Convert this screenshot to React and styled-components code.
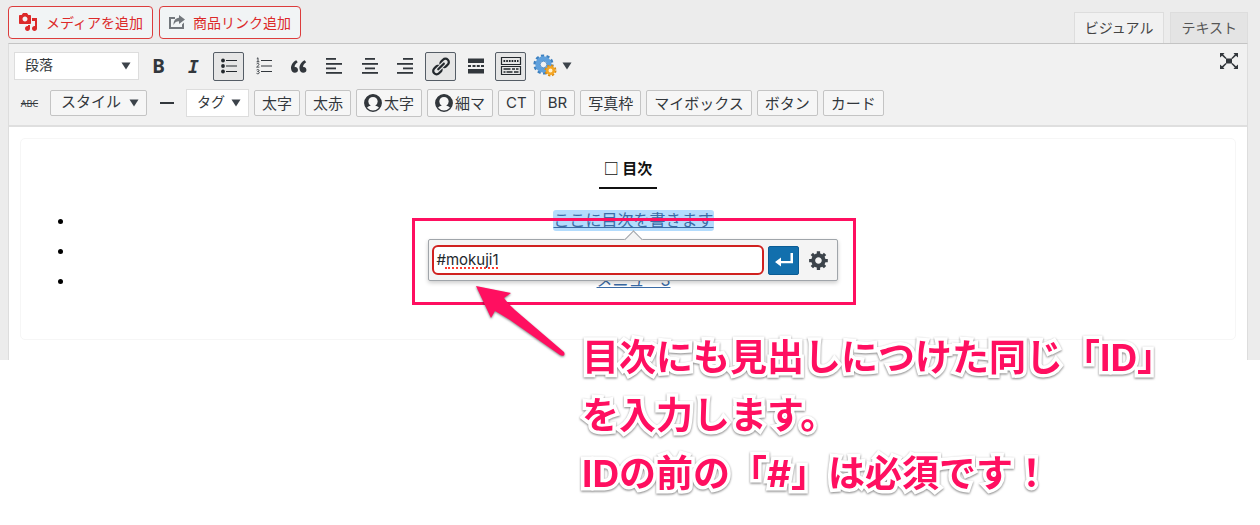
import React, { useState } from "react";
import styled, { createGlobalStyle } from "styled-components";

/* Icons */

const MediaIcon = () => (
  <svg width="20" height="20" viewBox="0 0 20 20" fill="currentColor" aria-hidden="true">
    <path d="M13 11V4c0-.55-.45-1-1-1h-1.67L9 1H5L3.67 3H2c-.55 0-1 .45-1 1v7c0 .55.45 1 1 1h10c.55 0 1-.45 1-1zM7 4.5c1.38 0 2.5 1.12 2.5 2.5S8.38 9.5 7 9.5 4.5 8.38 4.5 7 5.62 4.5 7 4.5zM14 6h5v10.5c0 1.38-1.12 2.5-2.5 2.5S14 17.88 14 16.5s1.12-2.5 2.5-2.5c.17 0 .34.02.5.05V9h-3V6zm-4 8.05V13h2v3.5c0 1.38-1.12 2.5-2.5 2.5S7 17.88 7 16.5 8.12 14 9.5 14c.17 0 .34.02.5.05z" />
  </svg>
);

const ShareIcon = () => (
  <svg width="16" height="14" viewBox="0 0 16 14" fill="#72777c" aria-hidden="true">
    <path d="M0 2h6v2H2v8h11V9.500l2-2V14H0z" />
    <path d="M10 0l6 4.500L10 9V6.300C7.500 6.300 5.800 7.200 4.600 10 4.200 5.800 6.500 3 10 2.700z" />
  </svg>
);

const BulletListIcon = () => (
  <svg width="20" height="20" viewBox="0 0 20 20" fill="currentColor" aria-hidden="true">
    <circle cx="4" cy="4.500" r="1.900" />
    <circle cx="4" cy="10" r="1.900" />
    <circle cx="4" cy="15.500" r="1.900" />
    <path d="M7 4h11v1H7zM7 9.500h11v1H7zM7 15h11v1H7z" />
  </svg>
);

const NumberListIcon = () => (
  <svg width="20" height="20" viewBox="0 0 20 20" fill="currentColor" aria-hidden="true">
    <path
      d="M2.800 2.600L4 1.800v4M2.600 5.800h2.800M2.600 8c.8-1 2.400-.7 2.400.4 0 .9-1.500 1.700-2.400 2.700h2.800M2.600 14c1-.8 2.500-.4 2.500.5 0 .7-.7 1-1.500 1 .9 0 1.700.3 1.700 1.100 0 1.200-1.900 1.500-2.800.7"
      fill="none"
      stroke="currentColor"
      strokeWidth="0.900"
    />
    <path d="M7 4h11v1H7zM7 9.500h11v1H7zM7 15h11v1H7z" />
  </svg>
);

const QuoteIcon = () => (
  <svg width="21" height="21" viewBox="0 0 20 20" fill="currentColor" aria-hidden="true">
    <path d="M9.49 13.22c0-.74-.2-1.38-.61-1.9-.62-.78-1.83-.88-2.53-.72-.29-1.65 1.11-3.75 2.92-4.65L7.88 4c-2.73 1.3-5.42 4.28-4.96 8.05C3.21 14.43 4.59 16 6.54 16c.85 0 1.56-.25 2.12-.75s.83-1.18.83-2.03zm8.05 0c0-.74-.2-1.38-.61-1.9-.63-.78-1.83-.88-2.53-.72-.29-1.65 1.11-3.75 2.92-4.65L15.93 4c-2.73 1.3-5.41 4.28-4.95 8.05.29 2.38 1.66 3.95 3.61 3.95.85 0 1.56-.25 2.12-.75s.83-1.18.83-2.03z" />
  </svg>
);

const alignStart = { left: 2, center: 5, right: 8 };

const AlignIcon = ({ side }) => (
  <svg width="20" height="20" viewBox="0 0 20 20" fill="currentColor" aria-hidden="true">
    <rect x={alignStart[side]} y="2" width="10" height="1.800" />
    <rect x="2" y="7" width="16" height="1.800" />
    <rect x={alignStart[side]} y="11.500" width="10" height="1.800" />
    <rect x="2" y="16" width="16" height="1.800" />
  </svg>
);

const LinkIcon = () => (
  <svg width="21" height="21" viewBox="0 0 20 20" fill="currentColor" aria-hidden="true">
    <path d="M17.74 2.76c1.68 1.69 1.68 4.41 0 6.1l-1.53 1.52c-1.12 1.12-2.7 1.47-4.14 1.09l2.62-2.61.76-.77.76-.76c.84-.84.84-2.2 0-3.04-.84-.85-2.2-.85-3.04 0l-.77.76-3.38 3.38c-.37-1.44-.02-3.02 1.1-4.14l1.52-1.53c1.69-1.68 4.42-1.68 6.1 0zM8.59 13.43l5.34-5.34c.42-.42.42-1.1 0-1.52-.44-.43-1.13-.39-1.53 0l-5.33 5.34c-.42.42-.42 1.1 0 1.52.44.43 1.13.39 1.52 0zm-.76 2.29l4.14-4.15c.38 1.44.03 3.02-1.09 4.14l-1.52 1.53c-1.69 1.68-4.41 1.68-6.1 0-1.68-1.68-1.68-4.42 0-6.1l1.53-1.52c1.12-1.12 2.7-1.47 4.14-1.1l-4.14 4.15c-.85.84-.85 2.2 0 3.05.84.84 2.2.84 3.04 0z" />
  </svg>
);

const MoreIcon = () => (
  <svg width="20" height="20" viewBox="0 0 20 20" fill="currentColor" aria-hidden="true">
    <path d="M2 2.500h16v4.500H2zM2 9h3v2H2zM6.500 9h3v2h-3zM10.800 9h3v2h-3zM15 9h3v2h-3zM2 13h16v4.500H2z" />
  </svg>
);

const KitchenSinkIcon = () => (
  <svg width="22" height="20" viewBox="0 0 22 20" aria-hidden="true">
    <g fill="none" stroke="currentColor">
      <path d="M1.500 1.500h19v7h-19zM1.500 10.500h19v8h-19z" strokeWidth="1.200" />
      <path d="M3.500 5h15" strokeWidth="2" strokeDasharray="1.700 1" />
      <path d="M3.500 13h7M12 13h3M16 13h2.500M3.500 16h2M6.500 16h6M14 16h4.500" strokeWidth="1.600" />
    </g>
  </svg>
);

const GearsIcon = () => (
  <svg width="24" height="24" viewBox="0 0 24 24" aria-hidden="true">
    <circle cx="10.500" cy="10.500" r="8.600" fill="none" stroke="#3d80c0" strokeWidth="3" strokeDasharray="3.100 2.300" />
    <circle cx="10.500" cy="10.500" r="5.800" fill="#f1f1f1" stroke="#5fa0dc" strokeWidth="4.800" />
    <circle cx="10.500" cy="10.500" r="3.300" fill="#f1f1f1" stroke="#3d80c0" strokeWidth="0.800" />
    <circle cx="17.500" cy="16.500" r="5" fill="none" stroke="#d98a12" strokeWidth="2" strokeDasharray="2.200 1.730" />
    <circle cx="17.500" cy="16.500" r="3.300" fill="#fff0cf" stroke="#f5a623" strokeWidth="2.600" />
  </svg>
);

const UserIcon = () => (
  <svg width="18" height="18" viewBox="0 0 18 18" aria-hidden="true">
    <circle cx="9" cy="9" r="8.200" fill="#f7f7f7" stroke="#32373c" strokeWidth="1.400" />
    <path
      d="M9 .8a8.200 8.200 0 0 0-6.500 13.200c1-1.200 2.600-1.900 4.300-2.200A5.200 5.200 0 0 1 4.300 7.500C4.300 4.800 6.300 3 9 3s4.700 1.800 4.700 4.500a5.200 5.200 0 0 1-2.500 4.300c1.700.3 3.300 1 4.300 2.200A8.200 8.200 0 0 0 9 .8z"
      fill="#32373c"
    />
  </svg>
);

const RuleIcon = () => (
  <svg width="20" height="20" viewBox="0 0 20 20" fill="currentColor" aria-hidden="true">
    <path d="M3 9h14v2H3z" />
  </svg>
);

const ExpandIcon = () => (
  <svg width="18" height="16" viewBox="0 0 18 16" fill="currentColor" aria-hidden="true">
    <path d="M0 0h4.500L3.200 1.400 6.500 5l-.9.900L2 2.800 0 4.500zM18 0h-4.500l1.300 1.400L11.500 5l.9.900L16 2.800l2 1.700zM0 16h4.500l-1.300-1.400L6.500 11l-.9-.9L2 13.200 0 11.500zM18 16h-4.500l1.300-1.400L11.500 11l.9-.9 3.600 3.100 2-1.700zM6 5.500h6v5H6z" />
  </svg>
);

const EnterIcon = () => (
  <svg width="18" height="14" viewBox="0 0 18 14" fill="currentColor" aria-hidden="true">
    <path d="M0 9l6-4.500V8h9.500V0H18v10.300H6v3.200z" />
  </svg>
);

const CogIcon = () => (
  <svg width="22" height="22" viewBox="0 0 20 20" fill="#3c434a" aria-hidden="true">
    <path d="M18 12h-2.180c-.17.7-.44 1.350-.81 1.930l1.540 1.540-2.100 2.100-1.540-1.540c-.58.36-1.230.63-1.910.79V19H8v-2.180c-.68-.16-1.330-.43-1.910-.79l-1.540 1.540-2.120-2.120 1.540-1.540c-.36-.58-.63-1.230-.79-1.910H1V9.030h2.170c.16-.7.44-1.350.8-1.940L2.430 5.550l2.100-2.100 1.540 1.540c.58-.37 1.240-.64 1.930-.81V2h3v2.180c.68.16 1.330.43 1.910.79l1.540-1.540 2.120 2.120-1.540 1.540c.36.59.64 1.240.8 1.940H18V12zm-8.500 1.500c1.660 0 3-1.340 3-3s-1.340-3-3-3-3 1.340-3 3 1.340 3 3 3z" />
  </svg>
);

const Caret = () => (
  <svg width="10" height="8" viewBox="0 0 10 8" fill="#3c434a" aria-hidden="true">
    <path d="M0.500 0.500h9L5 7.500z" />
  </svg>
);

/* Quick tag buttons of the second toolbar row */
const quickTags = [
  { label: "太字" },
  { label: "太赤" },
  { label: "太字", user: true },
  { label: "細マ", user: true },
  { label: "CT" },
  { label: "BR" },
  { label: "写真枠" },
  { label: "マイボックス" },
  { label: "ボタン" },
  { label: "カード" },
];

const Dropdown = ({ name, label, width, tone }) => (
  <SelectBox $width={width}>
    <Select aria-label={name} $tone={tone} defaultValue={label}>
      <option>{label}</option>
    </Select>
    <Caret />
  </SelectBox>
);

const App = () => {
  const [url, setUrl] = useState("#mokuji1");

  return (
    <>
      <GlobalStyle />
      <Screen>
        <Header>
          <MediaButtons>
            <MediaButton>
              <MediaIcon />
              メディアを追加
            </MediaButton>
            <MediaButton>
              <ShareIcon />
              商品リンク追加
            </MediaButton>
          </MediaButtons>
          <Tabs>
            <Tab $active>ビジュアル</Tab>
            <Tab>テキスト</Tab>
          </Tabs>
        </Header>

        <Editor>
          <Toolbar>
            <ToolRow>
              <Dropdown name="書式" label="段落" width={125} />
              <ToolGroups>
                <ToolGroup>
                  <ToolButton aria-label="太字">
                    <BoldMark>B</BoldMark>
                  </ToolButton>
                  <ToolButton aria-label="イタリック">
                    <ItalicMark>I</ItalicMark>
                  </ToolButton>
                  <ToolButton aria-label="番号なしリスト" $pressed>
                    <BulletListIcon />
                  </ToolButton>
                  <ToolButton aria-label="番号付きリスト">
                    <NumberListIcon />
                  </ToolButton>
                  <ToolButton aria-label="引用">
                    <QuoteIcon />
                  </ToolButton>
                  <ToolButton aria-label="左寄せ">
                    <AlignIcon side="left" />
                  </ToolButton>
                </ToolGroup>
                <ToolGroup>
                  <ToolButton aria-label="中央揃え">
                    <AlignIcon side="center" />
                  </ToolButton>
                  <ToolButton aria-label="右寄せ">
                    <AlignIcon side="right" />
                  </ToolButton>
                </ToolGroup>
                <ToolGroup>
                  <ToolButton aria-label="リンクの挿入" $pressed>
                    <LinkIcon />
                  </ToolButton>
                  <ToolButton aria-label="続きを読む">
                    <MoreIcon />
                  </ToolButton>
                  <ToolButton aria-label="ツールバー切り替え" $pressed>
                    <KitchenSinkIcon />
                  </ToolButton>
                </ToolGroup>
                <GearsButton aria-label="設定">
                  <GearsIcon />
                  <Caret />
                </GearsButton>
              </ToolGroups>
              <ExpandButton aria-label="集中執筆モード">
                <ExpandIcon />
              </ExpandButton>
            </ToolRow>

            <ToolRow>
              <ToolButton aria-label="打ち消し">
                <StrikeMark>ABC</StrikeMark>
              </ToolButton>
              <StyleTools>
                <Dropdown name="スタイル" label="スタイル" width={97} tone="button" />
                <ToolButton aria-label="横ライン">
                  <RuleIcon />
                </ToolButton>
                <Dropdown name="タグ" label="タグ" width={63} />
              </StyleTools>
              <QuickTags>
                {quickTags.map((tag, index) => (
                  <QuickTag key={index} $user={tag.user}>
                    {tag.user && <UserIcon />}
                    <TagLabel>{tag.label}</TagLabel>
                  </QuickTag>
                ))}
              </QuickTags>
            </ToolRow>
          </Toolbar>

          <Content>
            <TocBox>
              <TocTitle>□ 目次</TocTitle>
              <TocList>
                <li>
                  <LinkAnchor>
                    <TocLink href="#mokuji1" $selected>
                      ここに目次を書きます
                    </TocLink>
                    <LinkPopup>
                      <UrlField>
                        <UrlInput
                          type="text"
                          aria-label="URL"
                          spellCheck={false}
                          value={url}
                          onChange={(e) => setUrl(e.target.value)}
                        />
                        {url === "#mokuji1" && <SpellingMark />}
                      </UrlField>
                      <ApplyButton aria-label="適用">
                        <EnterIcon />
                      </ApplyButton>
                      <ToolButton aria-label="リンク設定">
                        <CogIcon />
                      </ToolButton>
                    </LinkPopup>
                    <Frame />
                    <Arrow width="96" height="78" viewBox="0 0 96 78" aria-hidden="true">
                      <path
                        d="M2 2L37 9 30 14Q34 20 41 26L90 68Q91 70 90 71.500Q88 72 86 71L36 36Q28 31 21 27L17 34Z"
                        fill="#ff0f60"
                      />
                    </Arrow>
                  </LinkAnchor>
                </li>
                <li>
                  <TocLink href="#mokuji2">メニュー2</TocLink>
                </li>
                <li>
                  <TocLink href="#mokuji3">メニュー3</TocLink>
                </li>
              </TocList>
            </TocBox>
          </Content>
        </Editor>
      </Screen>

      <Note>
        目次にも見出しにつけた同じ「ID」
        <br />
        を入力します。
        <br />
        IDの前の「#」は必須です！
      </Note>
    </>
  );
};

export default App;

// Styled Components

const GlobalStyle = createGlobalStyle`
  * {
    box-sizing: border-box;
  }

  body {
    margin: 0;
    background: #ffffff;
    color: #32373c;
    font-family: Inter, "Noto Sans CJK JP", sans-serif;
    font-size: 14px;
  }

  button,
  input,
  select {
    font-family: inherit;
    margin: 0;
  }

  svg {
    display: block;
    flex: none;
  }
`;

const Screen = styled.div`
  background: #ececec;
  padding: 0 12px 0 8px;
`;

const Header = styled.header`
  display: flex;
  justify-content: space-between;
  align-items: flex-end;
  height: 43px;
`;

const MediaButtons = styled.div`
  display: flex;
  gap: 6px;
  padding-bottom: 4px;
`;

const MediaButton = styled.button`
  display: flex;
  align-items: center;
  gap: 8px;
  height: 33px;
  padding: 0 9px 2px;
  background: #f1f4f5;
  color: #dc2a2a;
  border: 1px solid #dc3c3c;
  border-radius: 4px;
  font-size: 14px;
  white-space: nowrap;
  cursor: pointer;
`;

const Tabs = styled.div`
  display: flex;
  gap: 6px;
`;

const Tab = styled.button`
  position: relative;
  height: 31px;
  margin-bottom: ${(props) => (props.$active ? "-1px" : "0")};
  padding: 0 10px 2px;
  background: ${(props) => (props.$active ? "#f1f1f1" : "#e4e4e4")};
  color: ${(props) => (props.$active ? "#444444" : "#555555")};
  border: 1px solid #dddddd;
  border-bottom: none;
  font-size: 14px;
  cursor: pointer;
`;

const Editor = styled.main`
  border: 1px solid #dddddd;
  border-top-color: #c4c4c4;
  border-bottom: none;
  background: #ffffff;
`;

const Toolbar = styled.div`
  display: flex;
  flex-direction: column;
  gap: 7px;
  padding: 7px 5px;
  background: #f1f1f1;
  border-bottom: 2px solid #dfdfdf;
`;

const ToolRow = styled.div`
  display: flex;
  align-items: center;
  height: 30px;
`;

const SelectBox = styled.span`
  position: relative;
  display: inline-flex;
  align-items: center;
  width: ${(props) => props.$width}px;

  svg {
    position: absolute;
    right: 8px;
    pointer-events: none;
  }
`;

const Select = styled.select`
  appearance: none;
  width: 100%;
  height: ${(props) => (props.$tone === "button" ? "26px" : "28px")};
  padding: 0 10px 3px;
  background: ${(props) => (props.$tone === "button" ? "#f6f6f6" : "#ffffff")};
  color: #32373c;
  border: 1px solid ${(props) => (props.$tone === "button" ? "#c4c4c4" : "#dddddd")};
  border-radius: ${(props) => (props.$tone === "button" ? "2px" : "0")};
  font-size: ${(props) => (props.$tone === "button" ? "15px" : "14px")};
  cursor: pointer;
`;

const ToolGroups = styled.div`
  display: flex;
  gap: 5px;
  margin-left: 4px;
`;

const ToolGroup = styled.div`
  display: flex;
  gap: 4px;
`;

const ToolButton = styled.button`
  display: flex;
  align-items: center;
  justify-content: center;
  width: 31px;
  height: 29px;
  padding: 0;
  background: ${(props) => (props.$pressed ? "#e6e6e6" : "transparent")};
  color: ${(props) => (props.$pressed ? "#23282d" : "#32373c")};
  border: 1px solid ${(props) => (props.$pressed ? "#555d66" : "transparent")};
  border-radius: 2px;
  cursor: pointer;
`;

const BoldMark = styled.span`
  font-family: "Noto Sans", sans-serif;
  font-size: 19px;
  font-weight: 700;
`;

const ItalicMark = styled.span`
  font-family: "DejaVu Sans Mono", monospace;
  font-size: 18px;
  font-style: italic;
  font-weight: 700;
`;

const StrikeMark = styled.s`
  font-family: "Noto Sans", sans-serif;
  font-size: 9px;
`;

const GearsButton = styled(ToolButton)`
  width: 42px;
  gap: 5px;
`;

const ExpandButton = styled(ToolButton)`
  align-self: flex-start;
  height: 20px;
  width: 26px;
  margin-left: auto;
`;

const StyleTools = styled.div`
  display: flex;
  align-items: center;
  gap: 4px;
  margin-left: 5px;
`;

const QuickTags = styled.div`
  display: flex;
  align-items: center;
  gap: 5px;
  margin-left: 5px;
`;

const QuickTag = styled.button`
  display: flex;
  align-items: center;
  gap: 2px;
  height: ${(props) => (props.$user ? "28px" : "26px")};
  padding: 0 7px;
  background: #f6f6f6;
  color: #32373c;
  border: 1px solid #c4c4c4;
  border-radius: 2px;
  font-size: 15px;
  white-space: nowrap;
  cursor: pointer;
`;

const TagLabel = styled.span`
  padding-bottom: 2px;
`;

const Content = styled.div`
  padding: 11px 11px 20px;
`;

const TocBox = styled.section`
  display: flex;
  flex-direction: column;
  align-items: center;
  padding: 15px 43px 44px 54px;
  border: 1px solid #f6f6f6;
  border-radius: 5px;
`;

const TocTitle = styled.h2`
  margin: 0 11px 16px 0;
  padding: 0 5px 5px;
  border-bottom: 2px solid #111111;
  color: #111111;
  font-family: "Noto Sans CJK JP", sans-serif;
  font-size: 15px;
  font-weight: 700;
  line-height: 28px;
`;

const TocList = styled.ul`
  align-self: stretch;
  margin: 0;
  padding: 0;
  color: #000000;
  font-size: 16px;
  line-height: 30px;
  text-align: center;
`;

const LinkAnchor = styled.span`
  position: relative;
  display: inline-block;
  line-height: 21px;
`;

const TocLink = styled.a`
  display: inline-block;
  line-height: 21px;
  color: #3a6ba5;
  background: ${(props) => (props.$selected ? "#b3dcfd" : "transparent")};
  border-radius: 3px;
  text-decoration: underline;
`;

const LinkPopup = styled.div`
  position: absolute;
  z-index: 2;
  top: 29px;
  left: 50%;
  transform: translateX(-50%);
  display: flex;
  align-items: center;
  gap: 4px;
  width: 410px;
  height: 42px;
  padding: 0 3px;
  background: #f4f4f4;
  border: 1px solid #a0a5aa;
  border-radius: 2px;
  box-shadow: 0 2px 4px rgba(0, 0, 0, 0.2);

  /* Pointer towards the link */
  &::before {
    content: "";
    position: absolute;
    top: -7px;
    left: 50%;
    width: 12px;
    height: 12px;
    margin-left: -6px;
    background: #f4f4f4;
    border: 1px solid #a0a5aa;
    border-right: none;
    border-bottom: none;
    transform: rotate(45deg);
  }
`;

const UrlField = styled.div`
  position: relative;
  flex: 1;
  display: flex;
`;

const UrlInput = styled.input`
  width: 100%;
  height: 30px;
  padding: 0 2px 2px;
  color: #23282d;
  background: #ffffff;
  border: 2px solid #d0211f;
  border-radius: 6px;
  font-size: 15px;
  outline: none;
`;

const SpellingMark = styled.span`
  position: absolute;
  left: 13px;
  bottom: 6px;
  width: 53px;
  border-bottom: 2px dotted #ff3b30;
`;

const ApplyButton = styled.button`
  display: flex;
  align-items: center;
  justify-content: center;
  width: 31px;
  height: 29px;
  padding: 0;
  color: #ffffff;
  background: #126fad;
  border: 1px solid #0b5c94;
  border-radius: 2px;
  cursor: pointer;
`;

const Frame = styled.div`
  position: absolute;
  z-index: 3;
  top: 8px;
  left: 50%;
  width: 444px;
  height: 87px;
  margin-left: -221px;
  border: 3px solid #ff0f60;
  pointer-events: none;
`;

const Arrow = styled.svg`
  position: absolute;
  z-index: 3;
  top: 74px;
  left: -79px;
  pointer-events: none;
  filter: drop-shadow(0 1px 1px rgba(0, 0, 0, 0.5));
`;

const Note = styled.p`
  position: relative;
  z-index: 4;
  margin: -31px 0 0 calc(50% - 48px);
  color: #ff0f60;
  font-size: 37px;
  font-weight: 700;
  line-height: 58px;
  white-space: nowrap;
  -webkit-text-stroke: 7px #ffffff;
  paint-order: stroke fill;
  filter: drop-shadow(0 1px 1px rgba(0, 0, 0, 0.5));
`;
